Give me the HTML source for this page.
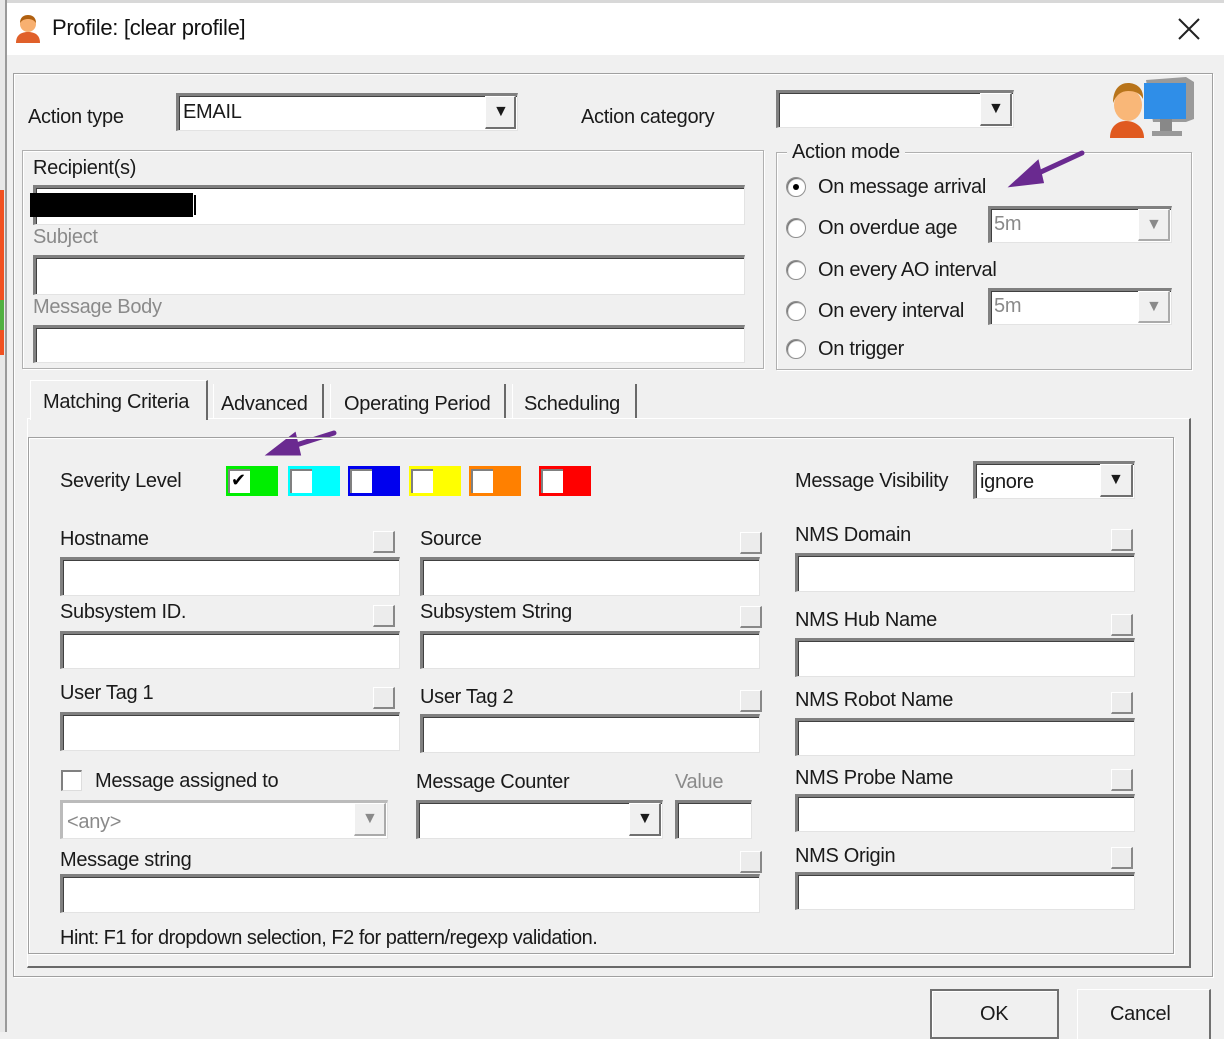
<!DOCTYPE html>
<html><head><meta charset="utf-8"><style>
*{margin:0;padding:0;box-sizing:border-box}
body{width:1224px;height:1032px;background:#f0f0f0;position:relative;overflow:hidden;font-family:"Liberation Sans",sans-serif;font-size:20px;color:#1a1a1a}
div,span{position:absolute}
.t{white-space:nowrap;line-height:1;letter-spacing:-0.3px}
.g{color:#8a8a8a}
.in{background:#fff;border-top:3px solid #808080;border-left:3px solid #808080;border-right:1px solid #e3e3e3;border-bottom:1px solid #e3e3e3;box-shadow:inset 1px 1px 0 #404040}
.btn{background:#f0f0f0;border-top:1px solid #fff;border-left:1px solid #fff;border-right:2px solid #707070;border-bottom:2px solid #707070}
.sb{width:22px;height:22px;border-top:1px solid #fff;border-left:1px solid #fff;border-right:2px solid #888;border-bottom:2px solid #888;background:#ececec}
.grp{border:1px solid #b0b0b0;box-shadow:1px 1px 0 #fff, inset 1px 1px 0 #fff}
.rad{width:20px;height:20px;border-radius:50%;background:#fff;border:1px solid #909090;box-shadow:inset 1px 1px 1px #666}
.sev{width:52px;height:30px}
.sev .cb{left:2px;top:3px;width:22px;height:24px;background:#fff;border-top:2px solid #808080;border-left:2px solid #808080}
.arr{font-size:16px}
</style></head><body>
<!-- left strip -->
<div style="left:0;top:0;width:5px;height:1032px;background:#e8e8e8"></div>
<div style="left:5px;top:0;width:2px;height:1032px;background:#9a9a9a"></div>
<div style="left:0;top:190px;width:4px;height:165px;background:#f05020"></div>
<div style="left:0;top:300px;width:4px;height:30px;background:#50b040"></div>
<!-- title bar -->
<div style="left:7px;top:0;width:1217px;height:55px;background:#fff;border-top:3px solid #d8d8d8"></div>
<svg style="position:absolute;left:14px;top:14px" width="28" height="30" viewBox="0 0 28 30"><path d="M2 29c0-8 5-11 12-11s12 3 12 11z" fill="#e0602a"/><circle cx="14" cy="10" r="8" fill="#f8b070"/><path d="M6 9c0-6 4-8 8-8s8 2 8 8c-2-3-5-4-8-4S8 6 6 9z" fill="#b06010"/></svg>
<div class="t" style="left:52px;top:17px;font-size:22px;color:#111">Profile: [clear profile]</div>
<svg style="position:absolute;left:1178px;top:18px" width="22" height="22"><path d="M1 1L21 21M21 1L1 21" stroke="#222" stroke-width="2"/></svg>
<!-- outer group -->
<div style="left:13px;top:73px;width:1200px;height:904px;border:1px solid #a0a0a0;box-shadow:inset 1px 1px 0 #fff,1px 1px 0 #fff"></div>
<div class="t" style="left:28px;top:107px">Action type</div>
<div class="in" style="left:176px;top:93px;width:342px;height:38px"></div>
<div class="t" style="left:183px;top:102px">EMAIL</div>
<div class="btn" style="left:485px;top:96px;width:31px;height:33px"></div>
<div class="t arr" style="left:493px;top:104px">▼</div>
<div class="t" style="left:581px;top:107px">Action category</div>
<div class="in" style="left:776px;top:90px;width:238px;height:38px"></div>
<div class="btn" style="left:980px;top:93px;width:32px;height:33px"></div>
<div class="t arr" style="left:988px;top:101px">▼</div>
<!-- person/computer icon -->
<svg style="position:absolute;left:1108px;top:75px" width="90" height="65" viewBox="0 0 90 65"><path d="M38 5l40-3 8 5v37l-8 3H45z" fill="#9a9a9a"/><rect x="36" y="8" width="42" height="36" fill="#2f8ee8"/><rect x="52" y="44" width="12" height="14" fill="#888"/><rect x="44" y="56" width="30" height="5" fill="#999"/><path d="M2 63c0-12 8-17 16-17s18 5 18 17z" fill="#e05a20"/><ellipse cx="20" cy="30" rx="14" ry="16" fill="#f9b778"/><path d="M5 28c0-14 7-20 15-20s16 5 15 16c-3-6-8-8-15-8S8 20 5 28z" fill="#b8741a"/></svg>
<!-- recipients group -->
<div class="grp" style="left:22px;top:150px;width:742px;height:219px"></div>
<div class="t" style="left:33px;top:158px">Recipient(s)</div>
<div class="in" style="left:33px;top:185px;width:712px;height:40px"></div>
<div style="left:30px;top:193px;width:163px;height:24px;background:#000"></div>
<div style="left:194px;top:195px;width:2px;height:20px;background:#000"></div>
<div class="t g" style="left:33px;top:227px">Subject</div>
<div class="in" style="left:33px;top:255px;width:712px;height:40px"></div>
<div class="t g" style="left:33px;top:297px">Message Body</div>
<div class="in" style="left:33px;top:325px;width:712px;height:38px"></div>
<!-- action mode -->
<div class="grp" style="left:776px;top:152px;width:416px;height:218px"></div>
<div class="t" style="left:787px;top:142px;background:#f0f0f0;padding:0 5px">Action mode</div>
<div class="rad" style="left:786px;top:177px"></div><div style="left:793px;top:184px;width:6px;height:6px;border-radius:50%;background:#000"></div>
<div class="t" style="left:818px;top:177px">On message arrival</div>
<div class="rad" style="left:786px;top:218px"></div><div class="t" style="left:818px;top:218px">On overdue age</div>
<div class="rad" style="left:786px;top:260px"></div><div class="t" style="left:818px;top:260px">On every AO interval</div>
<div class="rad" style="left:786px;top:301px"></div><div class="t" style="left:818px;top:301px">On every interval</div>
<div class="rad" style="left:786px;top:339px"></div><div class="t" style="left:818px;top:339px">On trigger</div>
<div class="in" style="left:988px;top:206px;width:184px;height:37px"></div><div class="t g" style="left:994px;top:214px">5m</div>
<div class="btn" style="left:1138px;top:209px;width:32px;height:32px;border-right-color:#aaa;border-bottom-color:#aaa"></div><div class="t arr g" style="left:1146px;top:217px">▼</div>
<div class="in" style="left:988px;top:288px;width:184px;height:37px"></div><div class="t g" style="left:994px;top:296px">5m</div>
<div class="btn" style="left:1138px;top:291px;width:32px;height:32px;border-right-color:#aaa;border-bottom-color:#aaa"></div><div class="t arr g" style="left:1146px;top:299px">▼</div>
<!-- arrows -->
<svg style="position:absolute;left:0;top:0" width="1224" height="1032"><g stroke="#6a2a90" stroke-width="5" stroke-linecap="round" fill="#6a2a90"><line x1="1082" y1="153" x2="1030" y2="177"/><path d="M1015 184l22-20 4 17z"/><line x1="334" y1="433" x2="290" y2="447"/><path d="M272 453l22-17 4 17z"/></g></svg>
<!-- tabs -->
<div style="left:27px;top:418px;width:1164px;height:550px;border-top:1px solid #fff;border-left:1px solid #fff;border-right:2px solid #696969;border-bottom:2px solid #696969"></div>
<div style="left:30px;top:380px;width:178px;height:40px;background:#f0f0f0;border-top:1px solid #fff;border-left:1px solid #fff;border-right:2px solid #696969"></div>
<div class="t" style="left:43px;top:392px">Matching Criteria</div>
<div style="left:213px;top:384px;width:111px;height:34px;border-right:2px solid #696969;border-left:1px solid #fff"></div>
<div class="t" style="left:221px;top:394px">Advanced</div>
<div style="left:330px;top:384px;width:176px;height:34px;border-right:2px solid #696969;border-left:1px solid #fff"></div>
<div class="t" style="left:344px;top:394px">Operating Period</div>
<div style="left:512px;top:384px;width:125px;height:34px;border-right:2px solid #696969;border-left:1px solid #fff"></div>
<div class="t" style="left:524px;top:394px">Scheduling</div>
<div style="left:28px;top:437px;width:1146px;height:517px;border:1px solid #a0a0a0;box-shadow:inset 1px 1px 0 #fff,1px 1px 0 #fff"></div>
<!-- severity -->
<div class="t" style="left:60px;top:471px">Severity Level</div>
<div class="sev" style="left:226px;top:466px;background:#00ee00"><div class="cb"></div><span class="t" style="left:5px;top:5px;font-size:18px;color:#000">✔</span></div>
<div class="sev" style="left:288px;top:466px;background:#00ffff"><div class="cb"></div></div>
<div class="sev" style="left:348px;top:466px;background:#0000ee"><div class="cb"></div></div>
<div class="sev" style="left:409px;top:466px;background:#ffff00"><div class="cb"></div></div>
<div class="sev" style="left:469px;top:466px;background:#ff8000"><div class="cb"></div></div>
<div class="sev" style="left:539px;top:466px;background:#ff0000"><div class="cb"></div></div>
<div class="t" style="left:795px;top:471px">Message Visibility</div>
<div class="in" style="left:973px;top:461px;width:162px;height:38px"></div>
<div class="t" style="left:980px;top:472px">ignore</div>
<div class="btn" style="left:1100px;top:464px;width:33px;height:33px"></div><div class="t arr" style="left:1108px;top:472px">▼</div>
<!-- fields col1 -->
<div class="t" style="left:60px;top:529px">Hostname</div><div class="sb" style="left:373px;top:531px"></div>
<div class="in" style="left:60px;top:557px;width:340px;height:39px"></div>
<div class="t" style="left:60px;top:602px">Subsystem ID.</div><div class="sb" style="left:373px;top:605px"></div>
<div class="in" style="left:60px;top:631px;width:340px;height:38px"></div>
<div class="t" style="left:60px;top:683px">User Tag 1</div><div class="sb" style="left:373px;top:687px"></div>
<div class="in" style="left:60px;top:712px;width:340px;height:39px"></div>
<!-- col2 -->
<div class="t" style="left:420px;top:529px">Source</div><div class="sb" style="left:740px;top:532px"></div>
<div class="in" style="left:420px;top:557px;width:340px;height:39px"></div>
<div class="t" style="left:420px;top:602px">Subsystem String</div><div class="sb" style="left:740px;top:606px"></div>
<div class="in" style="left:420px;top:631px;width:340px;height:38px"></div>
<div class="t" style="left:420px;top:687px">User Tag 2</div><div class="sb" style="left:740px;top:690px"></div>
<div class="in" style="left:420px;top:714px;width:340px;height:39px"></div>
<!-- col3 -->
<div class="t" style="left:795px;top:525px">NMS Domain</div><div class="sb" style="left:1111px;top:529px"></div>
<div class="in" style="left:795px;top:553px;width:340px;height:39px"></div>
<div class="t" style="left:795px;top:610px">NMS Hub Name</div><div class="sb" style="left:1111px;top:614px"></div>
<div class="in" style="left:795px;top:638px;width:340px;height:39px"></div>
<div class="t" style="left:795px;top:690px">NMS Robot Name</div><div class="sb" style="left:1111px;top:692px"></div>
<div class="in" style="left:795px;top:718px;width:340px;height:38px"></div>
<div class="t" style="left:795px;top:768px">NMS Probe Name</div><div class="sb" style="left:1111px;top:769px"></div>
<div class="in" style="left:795px;top:794px;width:340px;height:38px"></div>
<div class="t" style="left:795px;top:846px">NMS Origin</div><div class="sb" style="left:1111px;top:847px"></div>
<div class="in" style="left:795px;top:872px;width:340px;height:38px"></div>
<!-- bottom left -->
<div style="left:61px;top:770px;width:21px;height:21px;background:#fff;border-top:2px solid #808080;border-left:2px solid #808080;border-right:1px solid #ddd;border-bottom:1px solid #ddd"></div>
<div class="t" style="left:95px;top:771px">Message assigned to</div>
<div class="in" style="left:60px;top:800px;width:328px;height:39px;border-top-color:#bbb;border-left-color:#bbb;box-shadow:none"></div>
<div class="t g" style="left:67px;top:812px">&lt;any&gt;</div>
<div class="btn" style="left:354px;top:803px;width:32px;height:33px;border-right-color:#aaa;border-bottom-color:#aaa"></div><div class="t arr g" style="left:362px;top:811px">▼</div>
<div class="t" style="left:416px;top:772px">Message Counter</div>
<div class="in" style="left:416px;top:800px;width:247px;height:39px"></div>
<div class="btn" style="left:629px;top:803px;width:32px;height:33px"></div><div class="t arr" style="left:637px;top:811px">▼</div>
<div class="t g" style="left:675px;top:772px">Value</div>
<div class="in" style="left:675px;top:800px;width:77px;height:39px"></div>
<div class="t" style="left:60px;top:850px">Message string</div><div class="sb" style="left:740px;top:851px"></div>
<div class="in" style="left:60px;top:874px;width:700px;height:39px"></div>
<div class="t" style="left:60px;top:928px;letter-spacing:-0.5px">Hint: F1 for dropdown selection, F2 for pattern/regexp validation.</div>
<!-- buttons -->
<div style="left:930px;top:989px;width:129px;height:50px;border:2px solid #707070;background:#f0f0f0;box-shadow:inset 1px 1px 0 #fff"></div>
<div class="t" style="left:980px;top:1004px">OK</div>
<div style="left:1077px;top:989px;width:134px;height:50px;border-top:1px solid #fff;border-left:1px solid #fff;border-right:2px solid #707070;background:#f0f0f0"></div>
<div class="t" style="left:1110px;top:1004px">Cancel</div>
</body></html>
